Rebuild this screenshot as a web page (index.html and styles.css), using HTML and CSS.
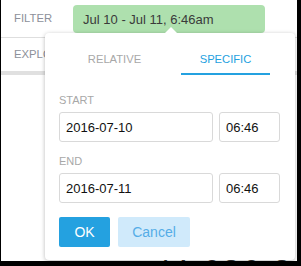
FILE: index.html
```html
<!DOCTYPE html>
<html lang="en">
<head>
  <meta charset="UTF-8">
  <meta name="viewport" content="width=device-width, initial-scale=1.0">
  <link rel="stylesheet" href="styles.css">
  <title>Filter</title>
</head>
<body>
  <div class="window">
    <header class="filter-bar">
      <span class="bar-label">FILTER</span>
      <button class="range-pill">Jul 10 - Jul 11, 6:46am</button>
    </header>
    <nav class="section-bar">
      <span class="bar-label">EXPLORE</span>
    </nav>
    <main class="content">
      <p class="big-number">(4,686.8 K</p>
    </main>

    <!-- date range popover, opened from the pill -->
    <section class="popover">
      <div class="tabs">
        <span class="tab">RELATIVE</span>
        <span class="tab active">SPECIFIC</span>
      </div>
      <div class="field first">
        <label class="field-label">START</label>
        <div class="field-row">
          <input class="date-input" type="text" value="2016-07-10">
          <input class="time-input" type="text" value="06:46">
        </div>
      </div>
      <div class="field">
        <label class="field-label">END</label>
        <div class="field-row">
          <input class="date-input" type="text" value="2016-07-11">
          <input class="time-input" type="text" value="06:46">
        </div>
      </div>
      <div class="actions">
        <button class="btn btn-ok">OK</button>
        <button class="btn btn-cancel">Cancel</button>
      </div>
    </section>
  </div>
</body>
</html>
```

FILE: styles.css
```css
:root {
  --color-grey-text: hsl(230, 6%, 58%);
  --color-grey-label: hsl(0, 0%, 66%);
  --color-border: hsl(0, 0%, 85%);
  --color-green-pill: hsl(120, 45%, 78%);
  --color-blue: hsl(200, 75%, 51%);
  --color-blue-light: hsl(204, 85%, 90%);
  --color-blue-text: hsl(204, 75%, 62%);
}

* {
  margin: 0;
  padding: 0;
  box-sizing: border-box;
}

body {
  background-color: #000;
  font-family: "Liberation Sans", Arial, sans-serif;
  color: #333;
}

.window {
  position: relative;
  background-color: #fff;
  inline-size: 296px;
  block-size: 261px;
  margin-left: 1px;
  overflow: hidden;
}

.filter-bar {
  display: flex;
  align-items: flex-start;
  block-size: 38px;
  padding-left: 13px;
  border-bottom: 1px solid hsl(0, 0%, 87%);
}

.bar-label {
  font-size: 11.3px;
  color: var(--color-grey-text);
  line-height: 13px;
}

.filter-bar .bar-label {
  margin-top: 12px;
}

.range-pill {
  font-family: inherit;
  font-size: 13px;
  color: #3a3a3a;
  text-align: left;
  background-color: var(--color-green-pill);
  border: none;
  border-radius: 4px;
  inline-size: 192px;
  block-size: 28px;
  margin: 5px 0 0 21px;
  padding: 0 10px;
}

.section-bar {
  display: flex;
  align-items: center;
  block-size: 37px;
  padding-left: 13px;
  border-bottom: 4px solid hsl(0, 0%, 88%);
}

.content {
  padding: 180px 0 0 158px;
}

.big-number {
  font-size: 30px;
  color: #333;
  line-height: 1;
  letter-spacing: 3px;
}

/* popover */

.popover {
  position: absolute;
  left: 44px;
  top: 33px;
  inline-size: 250px;
  background-color: #fff;
  border-radius: 4px;
  box-shadow: 0 1px 4px rgba(0, 0, 0, 0.28);
  padding: 0 14px 13px;
}

.popover::before {
  content: "";
  position: absolute;
  left: 120px;
  top: -6px;
  border-left: 6px solid transparent;
  border-right: 6px solid transparent;
  border-bottom: 6px solid #fff;
}

.tabs {
  display: flex;
}

.tab {
  flex: 1;
  margin: 0 11px;
  padding: 19px 0 7px;
  font-size: 11.2px;
  line-height: 14px;
  text-align: center;
  color: var(--color-grey-label);
  border-bottom: 2px solid transparent;
}

.tab.active {
  color: var(--color-blue);
  border-bottom-color: var(--color-blue);
}

.field {
  margin-top: 13px;
}

.field.first {
  margin-top: 19px;
}

.field-label {
  display: block;
  font-size: 11px;
  line-height: 13px;
  color: var(--color-grey-label);
  margin-bottom: 5px;
}

.field-row {
  display: flex;
  gap: 6px;
}

.date-input, .time-input {
  font-family: inherit;
  font-size: 13px;
  color: #111;
  block-size: 30px;
  border: 1px solid var(--color-border);
  border-radius: 3px;
  padding: 0 6px;
  outline: none;
}

.date-input {
  inline-size: 154px;
}

.time-input {
  inline-size: 61px;
}

.actions {
  display: flex;
  gap: 8px;
  margin-top: 14px;
}

.btn {
  font-family: inherit;
  font-size: 14px;
  border: none;
  border-radius: 2px;
  block-size: 30px;
}

.btn-ok {
  inline-size: 51px;
  color: #fff;
  background-color: var(--color-blue);
}

.btn-cancel {
  inline-size: 72px;
  color: var(--color-blue-text);
  background-color: var(--color-blue-light);
}
```
